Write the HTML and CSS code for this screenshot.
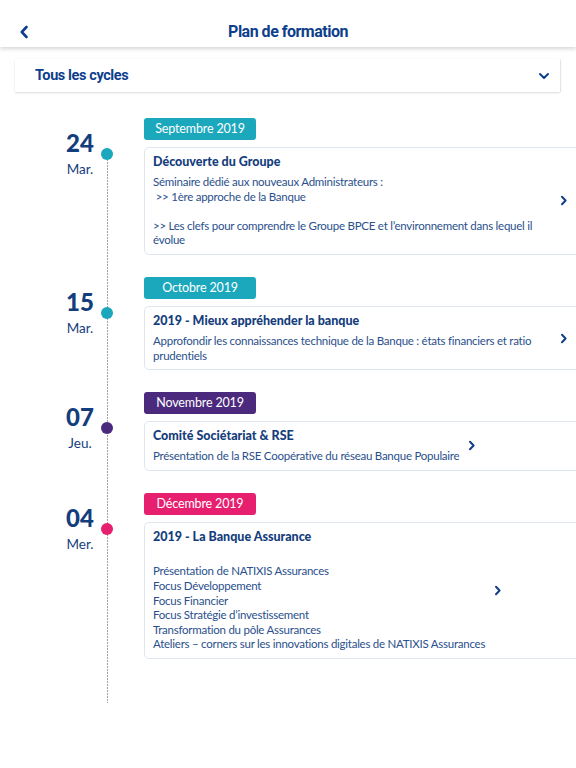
FILE: index.html
```html
<!DOCTYPE html>
<html lang="fr">
<head>
<meta charset="utf-8">
<title>Plan de formation</title>
<link rel="stylesheet" href="styles.css">
</head>
<body>
<header class="topbar">
  <button class="back" aria-label="Retour">
    <svg width="10" height="14" viewBox="0 0 10 14"><path d="M7.5 2 L2.8 7 L7.5 12" fill="none" stroke="#0e3f8c" stroke-width="2.6" stroke-linecap="round" stroke-linejoin="round"/></svg>
  </button>
  <h1 class="title">Plan de formation</h1>
</header>

<div class="filter">
  <span class="filter-label">Tous les cycles</span>
  <svg class="filter-caret" width="12" height="8" viewBox="0 0 12 8"><path d="M2 2 L6 6 L10 2" fill="none" stroke="#0e3f8c" stroke-width="2" stroke-linecap="round" stroke-linejoin="round"/></svg>
</div>

<main class="timeline">
  <section class="entry">
    <div class="badge teal">Septembre 2019</div>
    <div class="when">
      <div class="date"><div class="day-num">24</div><div class="day-name">Mar.</div></div>
      <span class="dot teal"></span>
    </div>
    <article class="card">
      <div class="card-body">
        <h2 class="card-title">Découverte du Groupe</h2>
        <p class="card-text">Séminaire dédié aux nouveaux Administrateurs :<br>&nbsp;&gt;&gt; 1ère approche de la Banque<br><br>&gt;&gt; Les clefs pour comprendre le Groupe BPCE et l’environnement dans lequel il évolue</p>
      </div>
      <svg class="chev" width="8" height="11" viewBox="0 0 8 11"><path d="M2 1.8 L5.6 5.5 L2 9.2" fill="none" stroke="#123f86" stroke-width="2" stroke-linecap="round" stroke-linejoin="round"/></svg>
    </article>
  </section>

  <section class="entry">
    <div class="badge teal">Octobre 2019</div>
    <div class="when">
      <div class="date"><div class="day-num">15</div><div class="day-name">Mar.</div></div>
      <span class="dot teal"></span>
    </div>
    <article class="card">
      <div class="card-body">
        <h2 class="card-title">2019 - Mieux appréhender la banque</h2>
        <p class="card-text">Approfondir les connaissances technique de la Banque : états financiers et ratio prudentiels</p>
      </div>
      <svg class="chev" width="8" height="11" viewBox="0 0 8 11"><path d="M2 1.8 L5.6 5.5 L2 9.2" fill="none" stroke="#123f86" stroke-width="2" stroke-linecap="round" stroke-linejoin="round"/></svg>
    </article>
  </section>

  <section class="entry">
    <div class="badge purple">Novembre 2019</div>
    <div class="when">
      <div class="date"><div class="day-num">07</div><div class="day-name">Jeu.</div></div>
      <span class="dot purple"></span>
    </div>
    <article class="card">
      <div class="card-body">
        <h2 class="card-title">Comité Sociétariat &amp; RSE</h2>
        <p class="card-text">Présentation de la RSE Coopérative du réseau Banque Populaire</p>
      </div>
      <svg class="chev" width="8" height="11" viewBox="0 0 8 11"><path d="M2 1.8 L5.6 5.5 L2 9.2" fill="none" stroke="#123f86" stroke-width="2" stroke-linecap="round" stroke-linejoin="round"/></svg>
    </article>
  </section>

  <section class="entry">
    <div class="badge pink">Décembre 2019</div>
    <div class="when">
      <div class="date"><div class="day-num">04</div><div class="day-name">Mer.</div></div>
      <span class="dot pink"></span>
    </div>
    <article class="card">
      <div class="card-body">
        <h2 class="card-title">2019 - La Banque Assurance</h2>
        <p class="card-text"><br>Présentation de NATIXIS Assurances<br>Focus Développement<br>Focus Financier<br>Focus Stratégie d’investissement<br>Transformation du pôle Assurances<br>Ateliers – corners sur les innovations digitales de NATIXIS Assurances</p>
      </div>
      <svg class="chev" width="8" height="11" viewBox="0 0 8 11"><path d="M2 1.8 L5.6 5.5 L2 9.2" fill="none" stroke="#123f86" stroke-width="2" stroke-linecap="round" stroke-linejoin="round"/></svg>
    </article>
  </section>
</main>
</body>
</html>
```

FILE: styles.css
```css
html, body {
  margin: 0;
  padding: 0;
  background: #ffffff;
  overflow-x: hidden;
}

body {
  font-family: Lato, "Open Sans", sans-serif;
  color: #2a4f8c;
}

.topbar {
  position: relative;
  height: 47px;
  display: flex;
  align-items: center;
  justify-content: center;
  background: #ffffff;
  box-shadow: 0 2px 4px rgba(0, 0, 0, 0.16);
}

.back {
  position: absolute;
  left: 19px;
  top: 25px;
  padding: 0;
  border: 0;
  background: none;
  display: flex;
}

.title {
  margin: 0;
  padding-top: 16px;
  font-family: Roboto, "Liberation Sans", sans-serif;
  font-weight: 700;
  font-size: 16px;
  letter-spacing: -0.5px;
  color: #0e3f8c;
}

.filter {
  margin: 12px 16px 0 15px;
  height: 33px;
  padding: 0 10px 0 20px;
  display: flex;
  align-items: center;
  justify-content: space-between;
  background: #ffffff;
  box-shadow: 0 1px 2px rgba(0, 0, 0, 0.14), 1px 0 1px rgba(0, 0, 0, 0.06);
}

.filter-label {
  font-family: Roboto, "Liberation Sans", sans-serif;
  font-weight: 700;
  font-size: 14.5px;
  letter-spacing: -0.4px;
  color: #0e3f8c;
}

.timeline {
  position: relative;
  padding: 26px 0 44px;
  display: flex;
  flex-direction: column;
  gap: 22px;
}

.timeline::before {
  content: "";
  position: absolute;
  left: 107px;
  top: 64px;
  bottom: 0;
  width: 1px;
  background: repeating-linear-gradient(to bottom, #a4a4a4 0 2px, transparent 2px 3px);
}

.entry {
  display: grid;
  grid-template-columns: 144px 1fr;
  grid-template-rows: auto auto;
  row-gap: 7px;
}

.badge {
  grid-column: 2;
  grid-row: 1;
  width: 112px;
  height: 22px;
  border-radius: 3px;
  color: #ffffff;
  font-size: 12.5px;
  letter-spacing: -0.15px;
  line-height: 21px;
  text-align: center;
}

.teal { background: #1ba8bd; }
.purple { background: #4b2a7e; }
.pink { background: #e6206f; }

.when {
  grid-column: 1;
  grid-row: 2;
  display: flex;
  align-items: flex-start;
  padding-left: 57px;
}

.date {
  width: 46px;
  margin-top: -17px;
  text-align: center;
  color: #143d7c;
}

.day-num {
  font-size: 24px;
  font-weight: 900;
  line-height: 26px;
}

.day-name {
  margin-top: 5px;
  font-size: 13.5px;
  line-height: 16px;
}

.dot {
  position: relative;
  z-index: 1;
  flex: none;
  width: 12px;
  height: 12px;
  margin: 1px 0 0 -2px;
  border-radius: 50%;
}

.card {
  grid-column: 2;
  grid-row: 2;
  margin-right: -12px;
  padding: 6px 8px 6px;
  border: 1.5px solid #dfe6f0;
  border-radius: 5px;
  display: flex;
  align-items: center;
}

.card-body {
  flex: 0 1 auto;
  max-width: 398px;
}

.card-title {
  margin: 0 0 5px;
  font-size: 12.5px;
  font-weight: 900;
  line-height: 16px;
  color: #143d7c;
}

.card-text {
  margin: 0;
  font-size: 11.5px;
  letter-spacing: -0.25px;
  line-height: 14.6px;
  color: #2a4f8c;
}

.chev {
  flex: none;
  margin-left: 9px;
}
```
